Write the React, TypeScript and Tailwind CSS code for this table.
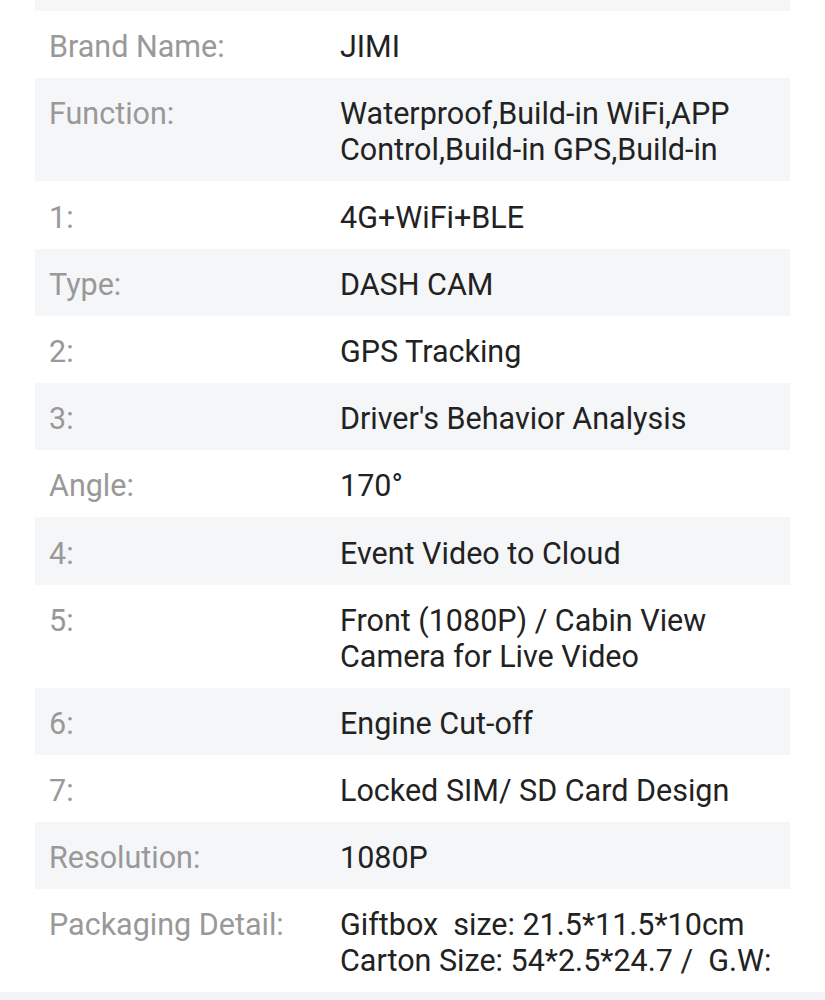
import React from 'react';

interface Spec {
  label: string;
  lines: string[];
}

const specs: Spec[] = [
  { label: 'Brand Name:', lines: ['JIMI'] },
  { label: 'Function:', lines: ['Waterproof,Build-in WiFi,APP', 'Control,Build-in GPS,Build-in'] },
  { label: '1:', lines: ['4G+WiFi+BLE'] },
  { label: 'Type:', lines: ['DASH CAM'] },
  { label: '2:', lines: ['GPS Tracking'] },
  { label: '3:', lines: ["Driver's Behavior Analysis"] },
  { label: 'Angle:', lines: ['170°'] },
  { label: '4:', lines: ['Event Video to Cloud'] },
  { label: '5:', lines: ['Front (1080P) / Cabin View', 'Camera for Live Video'] },
  { label: '6:', lines: ['Engine Cut-off'] },
  { label: '7:', lines: ['Locked SIM/ SD Card Design'] },
  { label: 'Resolution:', lines: ['1080P'] },
  { label: 'Packaging Detail:', lines: ['Giftbox  size: 21.5*11.5*10cm', 'Carton Size: 54*2.5*24.7 /  G.W:'] },
];

export default function App() {
  return (
    <div className="w-[825px] h-[1000px] bg-white overflow-hidden flex flex-col" style={{ fontFamily: 'Roboto, "Noto Sans", sans-serif' }}>
      <div className="mx-[35px] flex flex-col">
        {/* tail of the row above */}
        <div className="h-[11px] bg-[#f5f6f8]" />
        {specs.map((spec, i) => (
          <div
            key={i}
            className={`flex pt-[18.2px] pb-[13px] text-[30.5px] leading-[36px] ${i % 2 === 1 ? 'bg-[#f5f6f8]' : 'bg-white'}`}
          >
            <div className="w-[305px] shrink-0 pl-[14px] text-[#999999]">{spec.label}</div>
            <div className="flex-1 text-[#222222] pr-[10px]">
              {spec.lines.map((line, j) => (
                <div key={j} className="whitespace-pre">{line}</div>
              ))}
            </div>
          </div>
        ))}
      </div>
      <div className="flex-1 bg-[#f3f4f6]" />
    </div>
  );
}
